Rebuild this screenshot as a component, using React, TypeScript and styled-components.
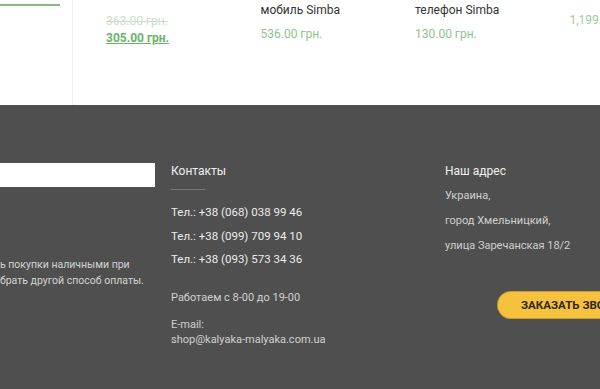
import React from "react";
import styled, { createGlobalStyle } from "styled-components";

const GlobalStyle = createGlobalStyle`
  html, body {
    margin: 0;
    padding: 0;
    background: #fff;
    font-family: Roboto, "Liberation Sans", Arial, sans-serif;
    overflow: hidden;
  }
`;

const products = [
  { name: "мобиль Simba", price: "536.00 грн." },
  { name: "телефон Simba", price: "130.00 грн." },
];

const phones = [
  "Тел.: +38 (068) 038 99 46",
  "Тел.: +38 (099) 709 94 10",
  "Тел.: +38 (093) 573 34 36",
];

const address = ["Украина,", "город Хмельницкий,", "улица Заречанская 18/2"];

export default function App() {
  return (
    <Page>
      <GlobalStyle />
      <Products>
        <ImageCell>
          <GreenBar />
        </ImageCell>
        <ProductCol $top={13}>
          <OldPrice>363.00 грн.</OldPrice>
          <SalePrice>305.00 грн.</SalePrice>
        </ProductCol>
        {products.map((p) => (
          <ProductCol key={p.name} $top={3}>
            <Name>{p.name}</Name>
            <Price>{p.price}</Price>
          </ProductCol>
        ))}
        <ProductCol $top={13}>
          <LastPrice>1,199.00 грн.</LastPrice>
        </ProductCol>
      </Products>
      <Footer>
        <LeftCol>
          <Input />
          <Note>
            ь покупки наличными при
            <br />
            брать другой способ оплаты.
          </Note>
        </LeftCol>
        <Column>
          <Heading>Контакты</Heading>
          <Divider />
          <PhoneList>
            {phones.map((t) => (
              <Phone key={t}>{t}</Phone>
            ))}
          </PhoneList>
          <Hours>Работаем с 8-00 до 19-00</Hours>
          <Mail>
            E-mail:
            <br />
            shop@kalyaka-malyaka.com.ua
          </Mail>
        </Column>
        <Column>
          <Heading>Наш адрес</Heading>
          {address.map((a) => (
            <AddrLine key={a}>{a}</AddrLine>
          ))}
          <CallButton>ЗАКАЗАТЬ ЗВОНОК</CallButton>
        </Column>
      </Footer>
    </Page>
  );
}

const Page = styled.div`
  width: 600px;
  height: 389px;
  display: flex;
  flex-direction: column;
  overflow: hidden;
`;

const Products = styled.div`
  height: 105px;
  display: flex;
  background: #fff;
  flex-shrink: 0;
`;

const ImageCell = styled.div`
  width: 73px;
  flex-shrink: 0;
  border-right: 1px solid #f1f1f1;
  padding-top: 4px;
  box-sizing: border-box;
`;

const GreenBar = styled.div`
  width: 60px;
  height: 2px;
  background: #82bd82;
`;

const ProductCol = styled.div<{ $top: number }>`
  width: 154.5px;
  flex-shrink: 0;
  box-sizing: border-box;
  padding: ${(p) => p.$top}px 0 0 33px;
  font-size: 12px;
  line-height: 14px;
  white-space: nowrap;
`;

const OldPrice = styled.div`
  margin-top: 1px;
  color: #c9dfc9;
  text-decoration: line-through;
`;

const SalePrice = styled.div`
  margin-top: 3px;
  color: #6bb36b;
  font-weight: 700;
  text-decoration: underline;
`;

const Name = styled.div`
  color: #333;
`;

const Price = styled.div`
  margin-top: 10px;
  color: #8cc48c;
`;

const LastPrice = styled.div`
  color: #9ccc9c;
`;

const Footer = styled.div`
  flex: 1;
  background: #4f4f4f;
  display: grid;
  grid-template-columns: 155px 258px 1fr;
  column-gap: 16px;
  padding-top: 58px;
  box-sizing: border-box;
  color: #d4d4d4;
  font-size: 11px;
`;

const LeftCol = styled.div`
  display: flex;
  flex-direction: column;
`;

const Input = styled.div`
  height: 24px;
  background: #fff;
`;

const Note = styled.div`
  margin-top: 70px;
  font-size: 10.5px;
  line-height: 16px;
  white-space: nowrap;
`;

const Column = styled.div`
  display: flex;
  flex-direction: column;
  align-items: flex-start;
`;

const Heading = styled.div`
  font-size: 12px;
  line-height: 14px;
  margin-top: 1px;
  color: #efefef;
`;

const Divider = styled.div`
  width: 34px;
  height: 1px;
  background: #777;
  margin-top: 11px;
`;

const PhoneList = styled.div`
  display: flex;
  flex-direction: column;
  gap: 9.5px;
  margin-top: 15px;
`;

const Phone = styled.div`
  font-size: 11.5px;
  line-height: 14px;
  color: #ececec;
`;

const Hours = styled.div`
  margin-top: 25px;
  line-height: 14px;
  color: #cfcfcf;
`;

const Mail = styled.div`
  margin-top: 12px;
  line-height: 15px;
  color: #cfcfcf;
`;

const AddrLine = styled.div`
  margin-top: 11px;
  line-height: 14px;
  color: #d0d0d0;
`;

const CallButton = styled.div`
  margin: 39px 0 0 53px;
  height: 26px;
  padding: 0 23px;
  border-radius: 13px;
  background: #f6c23e;
  box-shadow: 0 0 0 1px #c99a2e;
  color: #2e2618;
  font-weight: 700;
  font-size: 11.5px;
  display: flex;
  align-items: center;
  white-space: nowrap;
`;
